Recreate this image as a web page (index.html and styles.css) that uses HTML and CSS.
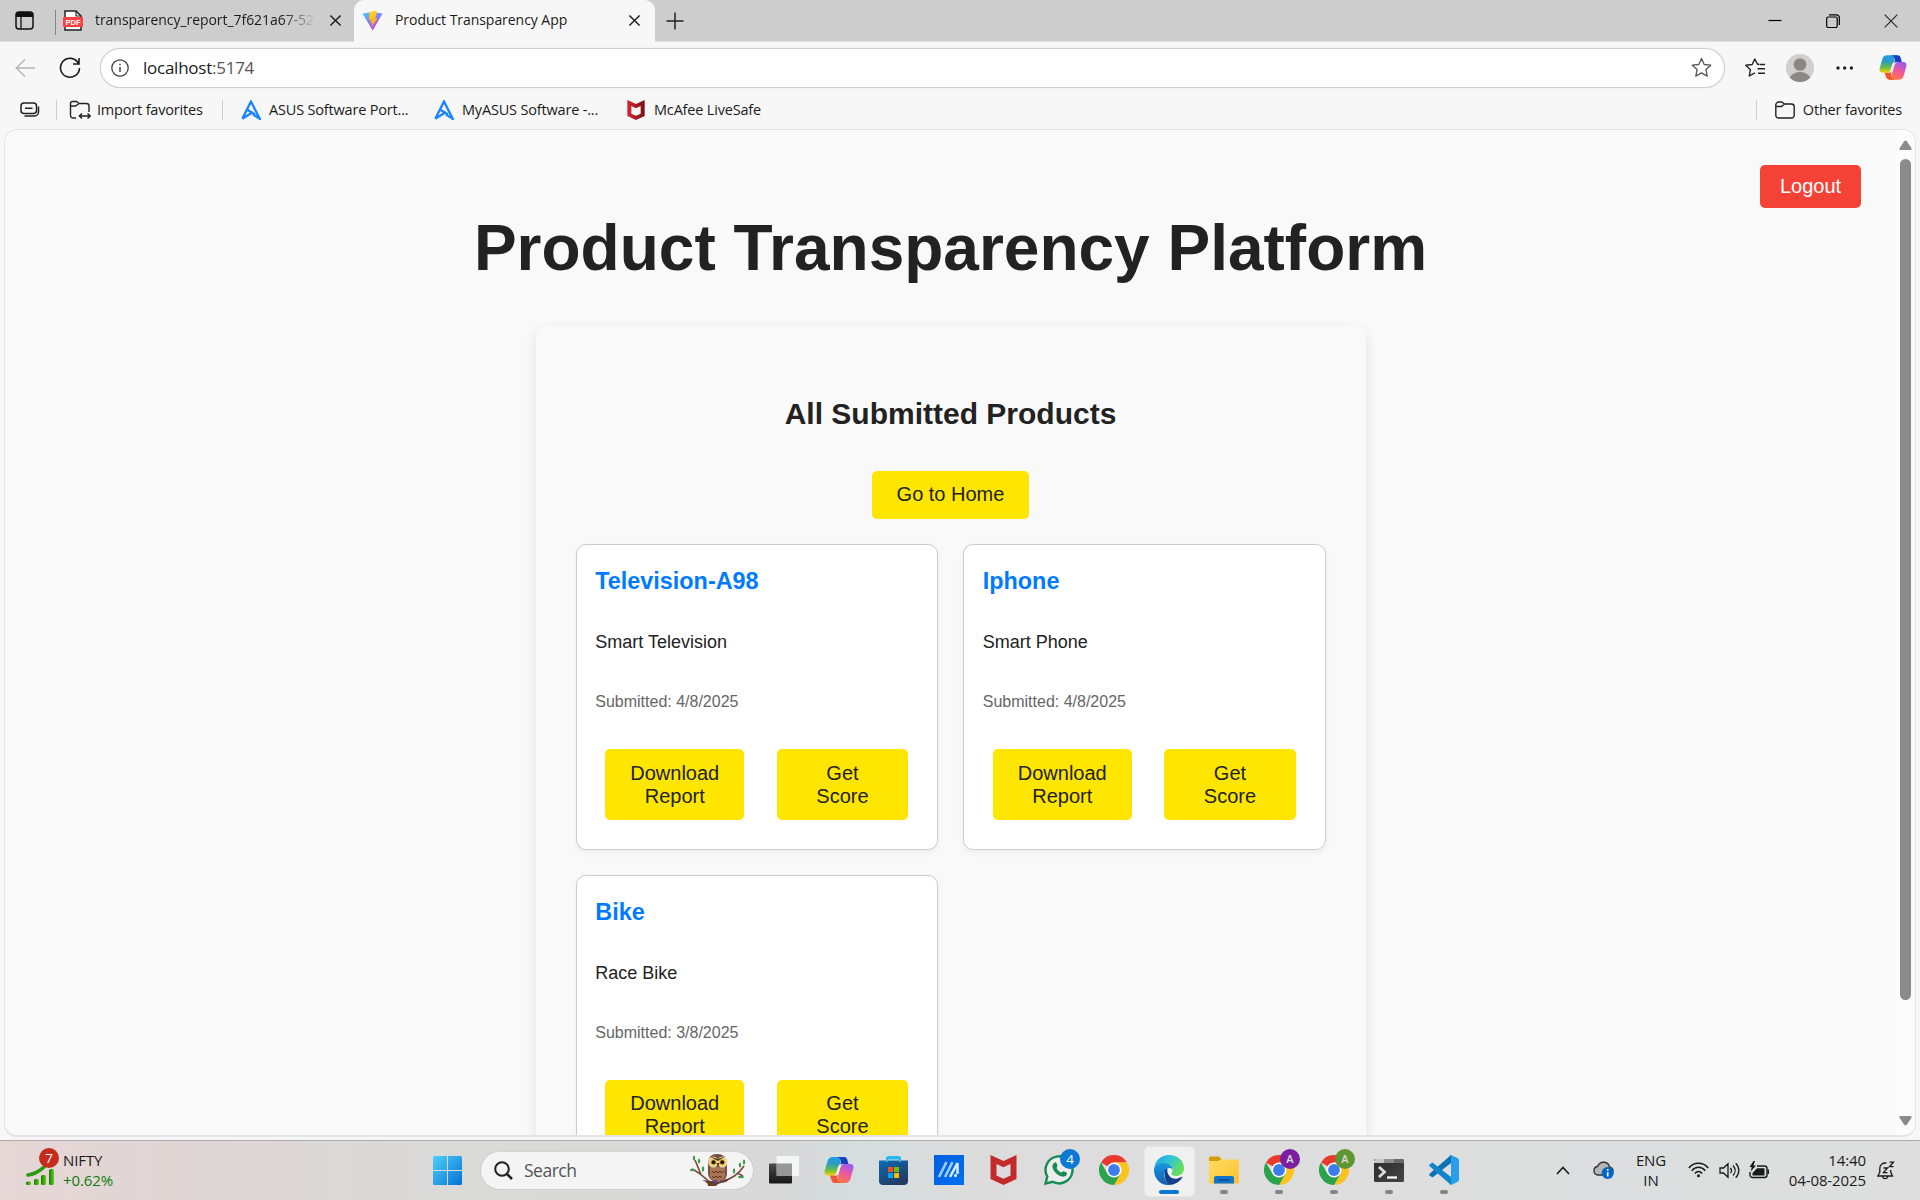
FILE: index.html
```html
<!DOCTYPE html>
<html lang="en">
<head>
<meta charset="utf-8">
<title>Product Transparency App</title>
<link rel="stylesheet" href="styles.css">
</head>
<body>
<svg class="defs" width="0" height="0">
  <defs>
    <linearGradient id="gVite" x1="0" y1="0" x2=".6" y2="1"><stop offset="0" stop-color="#41d1ff"/><stop offset="1" stop-color="#bd34fe"/></linearGradient>
    <linearGradient id="gBolt" x1=".4" y1="0" x2=".6" y2="1"><stop offset="0" stop-color="#ffd92e"/><stop offset="1" stop-color="#ff9b00"/></linearGradient>
    <linearGradient id="gCopA" x1="0" y1="0" x2="0" y2="1"><stop offset="0" stop-color="#1b9cf0"/><stop offset=".4" stop-color="#2e9fb8"/><stop offset=".7" stop-color="#6abf3f"/><stop offset="1" stop-color="#fcd104"/></linearGradient>
    <linearGradient id="gCopB" x1=".7" y1="0" x2=".3" y2="1"><stop offset="0" stop-color="#9d5bf0"/><stop offset=".5" stop-color="#f0589a"/><stop offset="1" stop-color="#ff7a3c"/></linearGradient>
    <linearGradient id="gWin" x1="0" y1="0" x2="1" y2="1"><stop offset="0" stop-color="#4fd0fb"/><stop offset="1" stop-color="#0472d4"/></linearGradient>
    <linearGradient id="gStore" x1="0" y1="0" x2=".6" y2="1"><stop offset="0" stop-color="#0b6cb6"/><stop offset="1" stop-color="#243a63"/></linearGradient>
    <linearGradient id="gEdgeTop" x1="0" y1="0" x2="1" y2=".5"><stop offset="0" stop-color="#1a9fe3"/><stop offset=".5" stop-color="#33c4d8"/><stop offset="1" stop-color="#66de5a"/></linearGradient>
    <linearGradient id="gEdgeBlue" x1="0" y1="0" x2="0" y2="1"><stop offset="0" stop-color="#1c97e0"/><stop offset="1" stop-color="#0f5fb4"/></linearGradient>
    <linearGradient id="gFold" x1="0" y1="0" x2="1" y2="1"><stop offset="0" stop-color="#ffdc63"/><stop offset="1" stop-color="#fcc12d"/></linearGradient>
    <linearGradient id="gGreen" x1="0" y1="0" x2="1" y2="0"><stop offset="0" stop-color="#107c10"/><stop offset="1" stop-color="#6ecb13"/></linearGradient>
    <linearGradient id="gMc" x1="0" y1="0" x2="1" y2="0"><stop offset="0" stop-color="#d8232f"/><stop offset="1" stop-color="#7a1118"/></linearGradient>
    <linearGradient id="gTv" x1="0" y1="0" x2="0" y2="1"><stop offset="0" stop-color="#4a4a4a"/><stop offset="1" stop-color="#161616"/></linearGradient>
    <linearGradient id="gTerm" x1="0" y1="0" x2="1" y2="1"><stop offset="0" stop-color="#2b2b2b"/><stop offset="1" stop-color="#454545"/></linearGradient>
    <linearGradient id="gAsus" x1="0" y1="0" x2="1" y2="1"><stop offset="0" stop-color="#005fdf"/><stop offset="1" stop-color="#0070ef"/></linearGradient>
  </defs>
  <symbol id="copilot" viewBox="0 0 30 28">
    <path fill="url(#gCopA)" d="M9 1h11c-2 1-3 2.600-3.600 5l-2.600 9c-.8 2.800-2 4.500-4.800 4.500H4C1 19.500 0 17.500.8 14.500L3.600 5C4.500 2.200 6 1 9 1z"/>
    <path fill="#1740c0" d="M13 1h7c1.800 0 2.600.8 3.200 2.600l1.300 4.500h-4.300c-2.200 0-3.300.8-4 2.400L17 5c-.4-2-1.500-3.600-4-4z"/>
    <path fill="url(#gCopB)" d="M21 27H10c2-1 3-2.600 3.600-5l2.600-9.400c.8-2.800 2-4.500 4.800-4.500h5c3 0 4 2 3.200 5L26.400 23c-.9 2.800-2.400 4-5.400 4z"/>
    <path fill="#f2562e" d="M17 27h-6c-2 0-3-1-3.500-2.700L6 19.500h3.500c2.100 0 3.500-.8 4.300-2.600L13 22c.3 2.500 1.500 4.500 4 5z"/>
    <path fill="#f1f1f1" d="M19.800 8.300c-2.300 0-3.300 1.600-3.900 3.700l-1.500 5c-.7 2-1.900 2.700-4.200 2.600 1.400-.8 1.800-2 2.300-3.600l1.600-5.200c.6-1.900 2.200-2.700 5.700-2.500z"/>
  </symbol>
  <symbol id="chrome" viewBox="0 0 30 30">
    <path fill="#ea3a2e" d="M15 15 2 7.500A15 15 0 0 1 28 7.500H15z"/>
    <path fill="#fcc31e" d="M15 7.500h13A15 15 0 0 1 15 30l6.500-11.200z"/>
    <path fill="#2ba24c" d="M2 7.500A15 15 0 0 0 15 30l6.500-11.300L15 22l-6.500-3.300z"/>
    <circle cx="15" cy="15" r="7.500" fill="#fff"/><circle cx="15" cy="15" r="5.900" fill="#3b7ded"/>
  </symbol>
  <symbol id="close" viewBox="0 0 14 14"><path d="M1.500 1.500l11 11M12.500 1.500l-11 11" stroke="#1a1a1a" stroke-width="1.500" fill="none"/></symbol>
  <symbol id="asusA" viewBox="0 0 20 20"><path d="M1.300 18.800 10 1.500l8.700 17.300-6.700-4.200M6.300 9.800 14 14.500l-4-2.500M1.300 18.800 12 12" fill="none" stroke="#1a84ff" stroke-width="2.300"/></symbol>
  <symbol id="mcafee" viewBox="0 0 26 30"><path d="M0 0l13 6L26 0v24l-13 6L0 24zM6 9v11.500l7 3.300 7-3.300V9l-7 3.200z" fill-rule="evenodd"/></symbol>
</svg>

<div class="window">
  <header class="tabs">
    <svg class="workspaces" width="19" height="19" viewBox="0 0 19 19"><rect x="1" y="1" width="17" height="17" rx="3" fill="none" stroke="#111" stroke-width="1.500"/><path d="M1 6V4a3 3 0 0 1 3-3h11a3 3 0 0 1 3 3v2z" fill="#111"/><path d="M6 6v12" stroke="#111" stroke-width="1.300"/></svg>
    <span class="tabs-rule"></span>
    <div class="tab tab-idle">
      <svg width="20" height="21" viewBox="0 0 20 21"><path d="M2 1h11l5 5v14H2z" fill="#fff" stroke="#222" stroke-width="1.500"/><path d="M13 1v5h5" fill="none" stroke="#222" stroke-width="1.200"/><rect y="7" width="20" height="10" rx="1" fill="#fa4040"/><text x="10" y="14.900" class="pdf-text">PDF</text></svg>
      <span class="tab-title fade">transparency_report_7f621a67-52e</span>
      <svg class="tab-x" width="13" height="13"><use href="#close"/></svg>
    </div>
    <div class="tab tab-active">
      <svg width="21" height="21" viewBox="0 0 21 21"><path d="M.5 3.500 10 2l10.500 1.500L10.700 20.500z" fill="url(#gVite)"/><path d="M14.500.5 7.500 2l-.6 8 2.400-.5-.7 4 1.800-.5-1 5 6.200-9.700-2.500.5 1.400-4z" fill="url(#gBolt)"/></svg>
      <span class="tab-title">Product Transparency App</span>
      <svg class="tab-x" width="13" height="13"><use href="#close"/></svg>
    </div>
    <svg class="plus" width="18" height="18"><path d="M9 .5v17M.5 9h17" stroke="#222" stroke-width="1.500"/></svg>
    <div class="win-controls">
      <svg width="14" height="14"><path d="M.5 6.500h13" stroke="#000" stroke-width="1.200"/></svg>
      <svg width="14" height="14" fill="none" stroke="#000" stroke-width="1.200"><rect x=".7" y="3" width="10.500" height="10.500" rx="1.500"/><path d="M3 .8h7.500a2.800 2.800 0 0 1 2.800 2.800V11"/></svg>
      <svg width="14" height="14"><path d="M.7.700l12.600 12.600M13.300.700.700 13.300" stroke="#222" stroke-width="1.100"/></svg>
    </div>
  </header>

  <div class="toolbar">
    <svg class="back" width="21" height="20" fill="none" stroke="#b5b5b5" stroke-width="1.400"><path d="M20 10H1M10 1.500 1.200 10 10 18.500"/></svg>
    <svg class="reload" width="22" height="22" fill="none" stroke="#1b1b1b" stroke-width="1.600"><path d="M19.500 6.500A9.500 9.500 0 1 0 20.500 11M20 1v6h-6"/></svg>
    <div class="address">
      <svg width="18" height="18" fill="none" stroke="#444"><circle cx="9" cy="9" r="8.200" stroke-width="1.300"/><path d="M9 8v5M9 4.700v1.600" stroke-width="1.500"/></svg>
      <span class="url">localhost<span class="port">:5174</span></span>
      <svg class="star" width="21" height="21" viewBox="0 0 21 21"><path d="M10.500 1.500l2.700 6 6.500.7-4.800 4.400 1.300 6.500-5.700-3.200-5.700 3.200 1.300-6.500L1.300 8.200l6.500-.7z" fill="none" stroke="#555" stroke-width="1.300" stroke-linejoin="round"/></svg>
    </div>
    <svg class="favs" width="21" height="20" viewBox="0 0 21 20" fill="none" stroke="#222" stroke-width="1.400" stroke-linejoin="round"><path d="M14 6.300 12.500 6.200 9.800 1 7.200 6.500.8 7.300l4.600 4.400L4.300 18l5.500-3.100M14.500 6.500H20M12.500 10.800H20M13 15.200h7"/></svg>
    <svg class="avatar" width="28" height="28"><defs><clipPath id="avc"><circle cx="14" cy="14" r="14"/></clipPath></defs><g clip-path="url(#avc)"><rect width="28" height="28" fill="#d2d0ce"/><circle cx="14" cy="10.500" r="6.300" fill="#8a8886"/><ellipse cx="14" cy="25.500" rx="10.500" ry="7.500" fill="#8a8886"/></g></svg>
    <svg class="dots" width="18" height="4" fill="#222"><circle cx="2" cy="2" r="1.700"/><circle cx="8.700" cy="2" r="1.700"/><circle cx="15.400" cy="2" r="1.700"/></svg>
    <svg class="cop-top" width="28" height="27"><use href="#copilot"/></svg>
  </div>

  <nav class="favbar">
    <svg class="tabgroup" width="20" height="16" fill="none" stroke="#222" stroke-width="1.500"><rect x="1" y="1" width="15.500" height="10.500" rx="3"/><path d="M5 6.300h7.500M18.500 4.500v5.500a4 4 0 0 1-4 4H4.500"/></svg>
    <span class="fav-rule r1"></span>
    <svg class="import" width="22" height="20" viewBox="0 0 22 20" fill="none" stroke="#222" stroke-width="1.400"><path d="M7 18H4a2.500 2.500 0 0 1-2.500-2.500V3.500A2 2 0 0 1 3.500 1.500h4l2.500 2h7.500A2.500 2.500 0 0 1 20 6v6M1.500 6h5L10 3.500M10.500 16h10.500M13 13.500 10.300 16l2.700 2.500M18.500 13.500l2.700 2.500-2.700 2.500"/></svg>
    <span class="fav f1">Import favorites</span>
    <span class="fav-rule r2"></span>
    <svg class="a1" width="20" height="20"><use href="#asusA"/></svg>
    <span class="fav f2">ASUS Software Port...</span>
    <svg class="a2" width="20" height="20"><use href="#asusA"/></svg>
    <span class="fav f3">MyASUS Software -...</span>
    <svg class="mc" width="18" height="20" fill="url(#gMc)"><use href="#mcafee"/></svg>
    <span class="fav f4">McAfee LiveSafe</span>
    <div class="fav-right">
      <span class="fav-rule"></span>
      <svg width="20" height="18" viewBox="0 0 20 18" fill="none" stroke="#222" stroke-width="1.400"><path d="M.8 4a3 3 0 0 1 3-3h3L9.500 3h7a2.700 2.700 0 0 1 2.700 2.700v8.500A2.700 2.700 0 0 1 16.500 17h-13A2.700 2.700 0 0 1 .8 14.200zM.8 5.500h5.700L9.500 3"/></svg>
      <span class="fav f5">Other favorites</span>
    </div>
  </nav>

  <div class="viewport">
    <main class="page">
      <button class="logout">Logout</button>
      <h1>Product Transparency Platform</h1>
      <section class="panel">
        <h2>All Submitted Products</h2>
        <button class="btn home">Go to Home</button>
        <div class="grid">
          <article class="card">
            <h3>Television-A98</h3>
            <p class="desc">Smart Television</p>
            <p class="date">Submitted: 4/8/2025</p>
            <div class="actions"><button class="btn">Download<br>Report</button><button class="btn score">Get<br>Score</button></div>
          </article>
          <article class="card">
            <h3>Iphone</h3>
            <p class="desc">Smart Phone</p>
            <p class="date">Submitted: 4/8/2025</p>
            <div class="actions"><button class="btn">Download<br>Report</button><button class="btn score">Get<br>Score</button></div>
          </article>
          <article class="card">
            <h3>Bike</h3>
            <p class="desc">Race Bike</p>
            <p class="date">Submitted: 3/8/2025</p>
            <div class="actions"><button class="btn">Download<br>Report</button><button class="btn score">Get<br>Score</button></div>
          </article>
        </div>
      </section>
    </main>
    <div class="scrollbar">
      <svg width="13" height="10" fill="#8b8b8b"><path d="M5.200 1.200q1.300-1.600 2.600 0l4.700 7q.6 1.800-1.200 1.800H1.700Q-.1 10 .5 8.200z"/></svg>
      <span class="thumb"></span>
      <svg width="13" height="10" fill="#8b8b8b"><path d="M5.200 8.800q1.300 1.600 2.600 0l4.700-7Q13.100 0 11.300 0H1.700Q-.1 0 .5 1.800z"/></svg>
    </div>
  </div>

  <footer class="taskbar">
    <div class="widget">
      <div class="widget-icon">
        <svg width="29" height="20" viewBox="0 0 29 20" fill="url(#gGreen)"><path d="M2 9C9 8 14 5 19 0" fill="none" stroke="#2b9a10" stroke-width="3.600" stroke-linecap="round"/><rect x="0" y="15.500" width="5" height="3.500" rx="1.500"/><rect x="8" y="13" width="5" height="6" rx="1.500"/><rect x="15" y="9" width="5" height="10" rx="1.500"/><rect x="23" y="3" width="5" height="16" rx="1.500"/></svg>
        <span class="badge red">7</span>
      </div>
      <div class="widget-text"><span>NIFTY</span><span class="up">+0.62%</span></div>
    </div>

    <div class="apps">
      <div class="app"><svg width="29" height="29" fill="url(#gWin)" viewBox="0 0 29 29"><path d="M1.500 0H14v14H0V1.500A1.500 1.500 0 0 1 1.500 0zM15 0h12.500A1.500 1.500 0 0 1 29 1.500V14H15zM0 15h14v14H1.500A1.500 1.500 0 0 1 0 27.500zM15 15h14v12.500a1.500 1.500 0 0 1-1.500 1.500H15z"/></svg></div>
      <div class="search">
        <svg width="19" height="19" fill="none" stroke="#222" stroke-width="2"><circle cx="8" cy="8" r="6.800"/><path d="M13 13l5 5" stroke-width="2.600"/></svg>
        <span>Search</span>
        <svg class="owl" width="56" height="34" viewBox="0 0 56 34">
          <path d="M2 16C9 19 15 25 20 29.500M11 21.500 5 7M54 13C48 22 42 25 34 28M47 20l6 3" fill="none" stroke="#7a5140" stroke-width="1.700"/>
          <path d="M12 27c9 1.500 18 1.500 29-2l-5 4c-4 1-8 1-10 4h-8c0-3-2-4-6-6z" fill="#6b3e26"/>
          <path d="M18 13c0-9 3-12 9-12s10 3 10 12v7c0 6-4 9-9 9s-10-3-10-9z" fill="#74503f"/>
          <path d="M20 14h15v8c0 4-3 7-7 7s-8-3-8-7z" fill="#a97456"/>
          <path d="M22 18l2 2 2-2 2 2 2-2 2 2 2-2M22 23l2 2 2-2 2 2 2-2 2 2" fill="none" stroke="#5d3424" stroke-width="1"/>
          <ellipse cx="23.300" cy="9" rx="5" ry="5.500" fill="#f0d9a6"/><ellipse cx="32.500" cy="9" rx="5" ry="5.500" fill="#f0d9a6"/>
          <circle cx="23.500" cy="9.200" r="3.200" fill="#e8b930"/><circle cx="32.200" cy="9.200" r="3.200" fill="#e8b930"/><circle cx="23.500" cy="9.200" r="2" fill="#171717"/><circle cx="32.200" cy="9.200" r="2" fill="#171717"/>
          <path d="M26.500 10h3L28 14zM19 3l9 3 8-3-8 5z" fill="#56382c"/><path d="M24 27v3M26.500 27v3M31 27v3" stroke="#4546a5" stroke-width="1.500"/>
          <g fill="#3f9a4e"><ellipse cx="4" cy="5" rx="1.200" ry="2.500"/><ellipse cx="9" cy="8" rx="1.200" ry="2.500"/><ellipse cx="2" cy="17" rx="2.200" ry="1.200"/><ellipse cx="13" cy="16" rx="1.200" ry="2.800"/><ellipse cx="44" cy="18" rx="1.200" ry="2.800"/><ellipse cx="50" cy="12" rx="1.200" ry="2.500"/><ellipse cx="54" cy="9" rx="1.200" ry="2.500"/><ellipse cx="51" cy="24" rx="3" ry="1.200"/></g>
        </svg>
      </div>
      <div class="app"><svg width="30" height="28"><rect y="7.500" width="23" height="20" rx="1" fill="url(#gTv)"/><rect x="7.500" width="22.500" height="20" rx="1" fill="#fff" opacity=".72"/><rect x="7.500" y="7.500" width="15.500" height="12.500" fill="#777" opacity=".6"/></svg></div>
      <div class="app"><svg width="30" height="28"><use href="#copilot"/></svg></div>
      <div class="app"><svg width="29" height="29"><path d="M8 6V3q0-2 2-2h9q2 0 2 2v3" fill="none" stroke="#27b7ee" stroke-width="2"/><path d="M0 4.500h29V25a4 4 0 0 1-4 4H4a4 4 0 0 1-4-4z" fill="url(#gStore)"/><path d="M8 6V2.500h13V6" fill="none" stroke="#27b7ee" stroke-width="2"/><path fill="#f25022" d="M9 11h5v5H9z"/><path fill="#7fba00" d="M15 11h5v5h-5z"/><path fill="#00a4ef" d="M9 17h5v5H9z"/><path fill="#ffb900" d="M15 17h5v5h-5z"/></svg></div>
      <div class="app"><svg width="30" height="30"><path fill="url(#gAsus)" d="M0 0h30v30H0z"/><path d="M5 22 12.500 7M11 22 18.500 7" fill="none" stroke="#9fccff" stroke-width="2.600"/><path d="M16 22l7.500-14v11" fill="none" stroke="#d6e9ff" stroke-width="2.600"/><circle cx="21.500" cy="20.500" r="1.500" fill="#fff"/></svg></div>
      <div class="app"><svg width="27" height="30" fill="#c22a2c"><use href="#mcafee"/></svg></div>
      <div class="app"><svg width="30" height="30" viewBox="0 0 30 30"><path d="M1.500 28.500l1.800-7A13.500 13.500 0 1 1 8.800 26.800z" fill="#ededed" stroke="#168c53" stroke-width="2.400"/><path d="M10 8c1-1 2-.8 2.500 0l1 2.700c.2.800-.9 1.600-1 2.300 1 2 2.700 3.600 4.700 4.500.8.100 1.700-1.400 2.500-1.200l2.700 1.300c.8.500.7 1.700 0 2.700-1.400 1.600-3.500 1.700-5.500 1-4-1.400-7-4.600-8.300-8.300-.5-2 0-4 1.400-5z" fill="#168c53"/></svg><span class="badge blue">4</span></div>
      <div class="app"><svg width="30" height="30"><use href="#chrome"/></svg></div>
      <div class="app open current"><svg width="30" height="30" viewBox="0 0 30 30"><path d="M.3 13C1.500 5 7.500 0 15 0c9 0 15 6 15 13.200 0 4.800-3.700 7.800-8 7.800-3 0-4.700-1.200-4.700-2.300 0-.8 1.200-1.400 1.200-3.700 0-3.700-4-6.500-8.500-6.500-5 0-8.500 2.200-9.700 4.500z" fill="url(#gEdgeTop)"/><path d="M0 15c0-4.500 4.500-7 9.500-7 5 0 9 2.700 9 7 0-2-4-3-6-1-3.500 3-3.200 12 4 16C7 31 0 24 0 15z" fill="url(#gEdgeBlue)"/><path d="M10.500 17.500c0-2 1.500-4 3-4-1.500 6 4 11.500 10 10 1.500-.3 3-1.300 4-1.700.7-.2 1 .3.600 1C25.500 27 20.500 30 15.500 29.800c-3-1.500-5-6.300-5-12.300z" fill="#123f86"/></svg></div>
      <div class="app open"><svg width="30" height="28" viewBox="0 0 30 28"><path d="M0 2Q0 .5 1.500.5H10L13 4v6H0z" fill="#d89b00"/><path d="M0 5h9l3-1.500h17q1 0 1 1V26q0 1.500-1.500 1.500h-27Q0 27.500 0 26z" fill="url(#gFold)"/><path d="M5 27.500V22q0-2 2-2h16q2 0 2 2v5.500z" fill="#0f73c9"/><path d="M10 24h10" stroke="#0a4a92" stroke-width="1.600"/></svg></div>
      <div class="app open"><svg width="30" height="30"><use href="#chrome"/></svg><span class="badge purple">A</span></div>
      <div class="app open"><svg width="30" height="30"><use href="#chrome"/></svg><span class="badge olive">A</span></div>
      <div class="app open"><svg width="30" height="23"><rect width="30" height="23" rx="1.500" fill="url(#gTerm)"/><path d="M1.500 0H10v4H0V1.500z" fill="#c6c6c6"/><path d="M10 0h10v4H10z" fill="#8d8d8d"/><path d="M20 0h8.500L30 1.500V4H20z" fill="#6a6a6a"/><path d="M5 8l5.500 5L5 18" fill="none" stroke="#ddd" stroke-width="2.800"/><path d="M13 18.500h10" stroke="#f2f2f2" stroke-width="2.400"/></svg></div>
      <div class="app open"><svg width="30" height="30" viewBox="0 0 30 30"><path d="M22 0v8L3.500 22.500 .6 20.500Q-.3 19.600.6 18.700z" fill="#0d72b5"/><path d="M22 30v-8L3.500 7.500.6 9.500q-.9.900 0 1.800z" fill="#1185cc"/><path d="M22 0l6.500 3Q30 3.700 30 5.300v19.400q0 1.600-1.500 2.300L22 30q-1 .3-1.800-.5.800.3 1.800-.8V1.300Q21 .2 20.200.500 21-.3 22 0z" fill="#27a0ec"/></svg></div>
    </div>

    <div class="tray">
      <svg class="chev" width="14" height="9" fill="none" stroke="#1a1a1a" stroke-width="1.600"><path d="M1 8l6-6.500L13 8"/></svg>
      <svg class="cloud" width="21" height="18" viewBox="0 0 21 18"><path d="M5 14a4.300 4.300 0 0 1-.6-8.500C6 2 9 1 11.500 1.300c3 .4 4.500 2.600 5 4.700 2 .5 3.500 2 3.500 4s-1.500 4-3.500 4z" fill="#b5b5b5" stroke="#333" stroke-width="1.400"/><circle cx="14.700" cy="12" r="6" fill="#0465c4"/><path d="M14.700 11v4.500M14.700 8v1.700" stroke="#fff" stroke-width="1.600"/></svg>
      <div class="lang"><span>ENG</span><span>IN</span></div>
      <svg class="wifi" width="21" height="16" viewBox="0 0 21 16" fill="none" stroke="#1a1a1a" stroke-width="1.500"><path d="M.8 6C6-.2 15-.2 20.200 6M3.700 8.800c4-4.600 9.600-4.600 13.600 0M6.800 11.500c2.300-2.700 5.100-2.700 7.400 0"/><circle cx="10.500" cy="13.700" r="1.500" fill="#1a1a1a" stroke="none"/></svg>
      <svg class="sound" width="21" height="17" viewBox="0 0 21 17" fill="none" stroke="#1a1a1a" stroke-width="1.300"><path d="M1 6h3.500L9 1.700v13.600L4.500 11H1zM11.500 6c1.200 1.500 1.200 3.500 0 5M14 3.500c2.800 3 2.800 7 0 10M16.700 1.200c4.200 4.300 4.200 10.300 0 14.600"/></svg>
      <svg class="batt" width="21" height="18" viewBox="0 0 21 18"><path d="M8 5h7.500A2.500 2.500 0 0 1 18 7.500V14a2.500 2.500 0 0 1-2.500 2.500h-12A2.500 2.500 0 0 1 1 14v-3" fill="none" stroke="#1a1a1a" stroke-width="1.400"/><path d="M3.500 14.500V12L8 7.200h7.500v7.300zM18.500 8.500H20v4.500h-1.500z" fill="#1a1a1a"/><path d="M4.500 0L.5 6h2.200L1.800 10.500 7 4.500H4.500L6 0z" fill="#1a1a1a"/></svg>
      <div class="clock"><span>14:40</span><span>04-08-2025</span></div>
      <svg class="bell" width="18" height="19" viewBox="0 0 18 19" fill="none" stroke="#1a1a1a" stroke-width="1.300"><path d="M9.500 2.200C5.500 1.300 2.800 4 2.800 7v4.200L.9 15h14.600L13.700 11V9M5.500 15.200c.3 3.300 5 3.300 5.300 0M6.500 7h4l-4 4.700h4M12.500 1.200h4l-4 4.500h4"/></svg>
    </div>
  </footer>
</div>
</body>
</html>
```
FILE: styles.css
```css
* { box-sizing: border-box; }
body { margin: 0; background: #f7f7f7; font-family: "Liberation Sans", Arial, sans-serif; color: #222; overflow: hidden; }
svg { display: block; flex: none; }
.defs { position: absolute; }
.window { width: 1920px; height: 1200px; display: flex; flex-direction: column; }
.tabs, .toolbar, .favbar, .taskbar { font-family: "Open Sans", "Noto Sans", sans-serif; color: #1b1b1b; white-space: nowrap; flex: none; }

/* tab strip */
.tabs { height: 42px; background: #cdcdcd; display: flex; align-items: center; border-bottom: 1px solid #e2e2e2; }
.workspaces { margin-left: 15px; }
.tabs-rule { width: 1px; height: 25px; background: #858585; margin-left: 21px; margin-top: 3px; }
.tab { height: 42px; display: flex; align-items: center; font-size: 14px; }
.tab-idle { width: 298px; padding-left: 7px; }
.tab-title { margin-left: 12px; letter-spacing: -.05px; padding-bottom: 2px; }
.fade { width: 223px; overflow: hidden; color: transparent; background: linear-gradient(90deg, #1b1b1b 84%, #cdcdcd 99%); background-clip: text; -webkit-background-clip: text; }
.tab-idle .tab-x { margin-left: 11px; }
.tab-active { width: 301px; background: #f7f7f7; border-radius: 10px 10px 0 0; padding: 0 14px 0 8px; }
.tab-active .tab-x { margin-left: auto; }
.pdf-text { font: bold 7.5px "Liberation Sans", sans-serif; fill: #fff; text-anchor: middle; }
.plus { margin-left: 11px; }
.win-controls { margin-left: auto; display: flex; gap: 44px; padding-right: 22px; }

/* address row */
.toolbar { height: 51px; display: flex; align-items: center; }
.back { margin-left: 15px; }
.reload { margin-left: 23px; }
.address { width: 1625px; height: 40px; margin-left: 19px; border: 1px solid #cfcfcf; border-radius: 20px; background: #fff; display: flex; align-items: center; padding: 0 12px 0 10px; box-shadow: 0 0 1px #ccc; }
.url { margin-left: 14px; font-size: 17px; letter-spacing: -.25px; }
.port { color: #555; }
.star { margin-left: auto; }
.favs { margin-left: 20px; }
.avatar { margin-left: 20px; }
.dots { margin-left: 22px; }
.cop-top { margin-left: 25px; }

/* favourites */
.favbar { height: 36px; display: flex; align-items: center; padding-bottom: 3px; }
.fav { font-size: 14.500px; overflow: visible; letter-spacing: -.18px; padding-bottom: 1px; }
.fav-rule { width: 1px; height: 20px; background: #cfcfcf; }
.tabgroup { margin-left: 20px; }
.r1 { margin-left: 16px; }
.import { margin-left: 12px; }
.f1 { width: 124px; margin-left: 6px; }
.r2 { margin-left: 1px; }
.a1 { margin-left: 18px; }
.f2, .f3 { width: 165px; margin-left: 8px; }
.mc { width: 18px; }
.f4 { margin-left: 9px; }
.fav-right { margin-left: auto; display: flex; align-items: center; padding-right: 18px; }
.fav-right svg { margin: 0 8px 0 18px; }

/* page */
.viewport { height: 1008px; width: 1912px; margin-left: 4px; border: 1px solid #e4e4e4; border-bottom-width: 2px; border-radius: 13px; background: #f9f9f9; display: flex; overflow: hidden; flex: none; }
.page { width: 1891px; height: 1005px; overflow: hidden; padding-top: 35px; display: flex; flex-direction: column; align-items: center; }
button { font: 20px/23px "Liberation Sans", Arial, sans-serif; border: 0; border-radius: 5px; color: #222; }
.logout { align-self: flex-end; margin-right: 35px; width: 101px; height: 43px; padding: 0; background: #f44336; color: #fff; flex: none; }
h1 { margin: 4.500px 0 43px; font-size: 64px; line-height: 70.400px; flex: none; white-space: nowrap; }
.panel { width: 830px; height: 900px; flex: none; border-radius: 10px; padding: 70.500px 40px 0; box-shadow: 0 5px 12.500px rgba(0, 0, 0, .1); display: flex; flex-direction: column; align-items: center; background: #f9f9f9; }
h2 { margin: 0; font-size: 30px; line-height: 36px; }
.btn { background: #ffe600; padding: 12.500px 25px; }
.home { margin-top: 38.500px; height: 48px; }
.grid { width: 750px; margin-top: 25px; display: grid; grid-template-columns: 1fr 1fr; gap: 25px; }
.card { height: 306px; background: #fff; border: 1px solid #ccc; border-radius: 10px; padding: 22px 18.750px 0; box-shadow: 0 2.500px 6px rgba(0, 0, 0, .05); }
.card h3 { margin: 0; font-size: 23.400px; line-height: 28px; color: #007bff; }
.card p { margin: 0; }
.card .desc { font-size: 18px; line-height: 24px; margin-top: 35.500px; }
.card .date { font-size: 16px; line-height: 20px; margin-top: 38px; color: #666; }
.actions { display: flex; padding: 0 10px; margin-top: 36.500px; gap: 32.500px; }
.actions .btn { height: 71px; white-space: nowrap; }
.card:nth-child(-n+2) .btn { padding: 13.500px 25px 11.500px; }
.actions .score { flex: 1; }
.scrollbar { width: 19px; background: #fcfcfc; display: flex; flex-direction: column; align-items: center; padding: 10px 1px 9px 0; margin-right: -1px; }
.thumb { width: 11px; height: 841px; border-radius: 6px; background: #8b8b8b; margin: 9px 0 auto; }

/* taskbar */
.taskbar { height: 60px; margin-top: 3px; border-top: 1px solid #ababab; padding-bottom: 1px; display: flex; align-items: center; background: linear-gradient(90deg, #e6d6d6 0, #dfd7d5 200px, #dadad9 430px, #d9d9d9 780px, #d4dddf 860px, #dcdcdc 960px, #dedede 1450px, #dcdfdf 1600px, #dedede 1920px); }
.widget { width: 420px; display: flex; padding-left: 26px; }
.widget-icon { position: relative; width: 29px; padding-top: 16px; }
.widget-text, .lang, .clock { display: flex; flex-direction: column; font-size: 15px; line-height: 20px; letter-spacing: -.1px; }
.widget-text { margin-left: 8px; }
.up { color: #0f7b0f; }
.badge { position: absolute; width: 20px; height: 20px; border-radius: 50%; color: #fff; font-size: 13.500px; line-height: 20px; text-align: center; }
.red { background: #c42b1c; left: 13px; top: -2px; }
.apps { display: flex; align-items: center; height: 58px; }
.app { width: 55px; height: 58px; display: flex; align-items: center; justify-content: center; position: relative; }
.search { width: 274px; height: 39px; margin: 0 2px 0 5px; background: #f4f4f4; border: 1px solid #ccc; border-top-color: #d4d4d4; border-radius: 20px; display: flex; align-items: center; padding: 0 7px 0 13px; font-size: 17.500px; color: #555; }
.search span { margin-left: 11px; letter-spacing: -.5px; padding-bottom: 1px; }
.owl { margin-left: auto; }
.blue { background: #0a78d4; right: 6px; top: 8px; }
.purple, .olive { right: 6px; top: 8px; font-size: 11px; font-weight: 600; color: #ddd; }
.purple { background: #7b1fa2; }
.olive { background: #5f9633; }
.open::after { content: ""; position: absolute; left: 50%; bottom: 5px; width: 8px; height: 4px; margin-left: -4px; border-radius: 2px; background: #858585; }
.current::before { content: ""; position: absolute; left: 3px; top: 5px; width: 49px; height: 49px; border-radius: 5px; background: #f0f0f0; border: 1px solid #e6e6e6; }
.current svg { position: relative; }
.current::after { width: 20px; margin-left: -10px; background: #0078d4; }
.tray { margin-left: auto; display: flex; align-items: center; padding-right: 25px; }
.cloud { margin-left: 23px; }
.lang { width: 40px; margin-left: 17px; align-items: center; }
.wifi { margin-left: 17px; }
.sound { margin-left: 10px; }
.batt { margin-left: 9px; }
.clock { width: 86px; margin-left: 10px; align-items: flex-end; }
.bell { margin-left: 11px; }
```
